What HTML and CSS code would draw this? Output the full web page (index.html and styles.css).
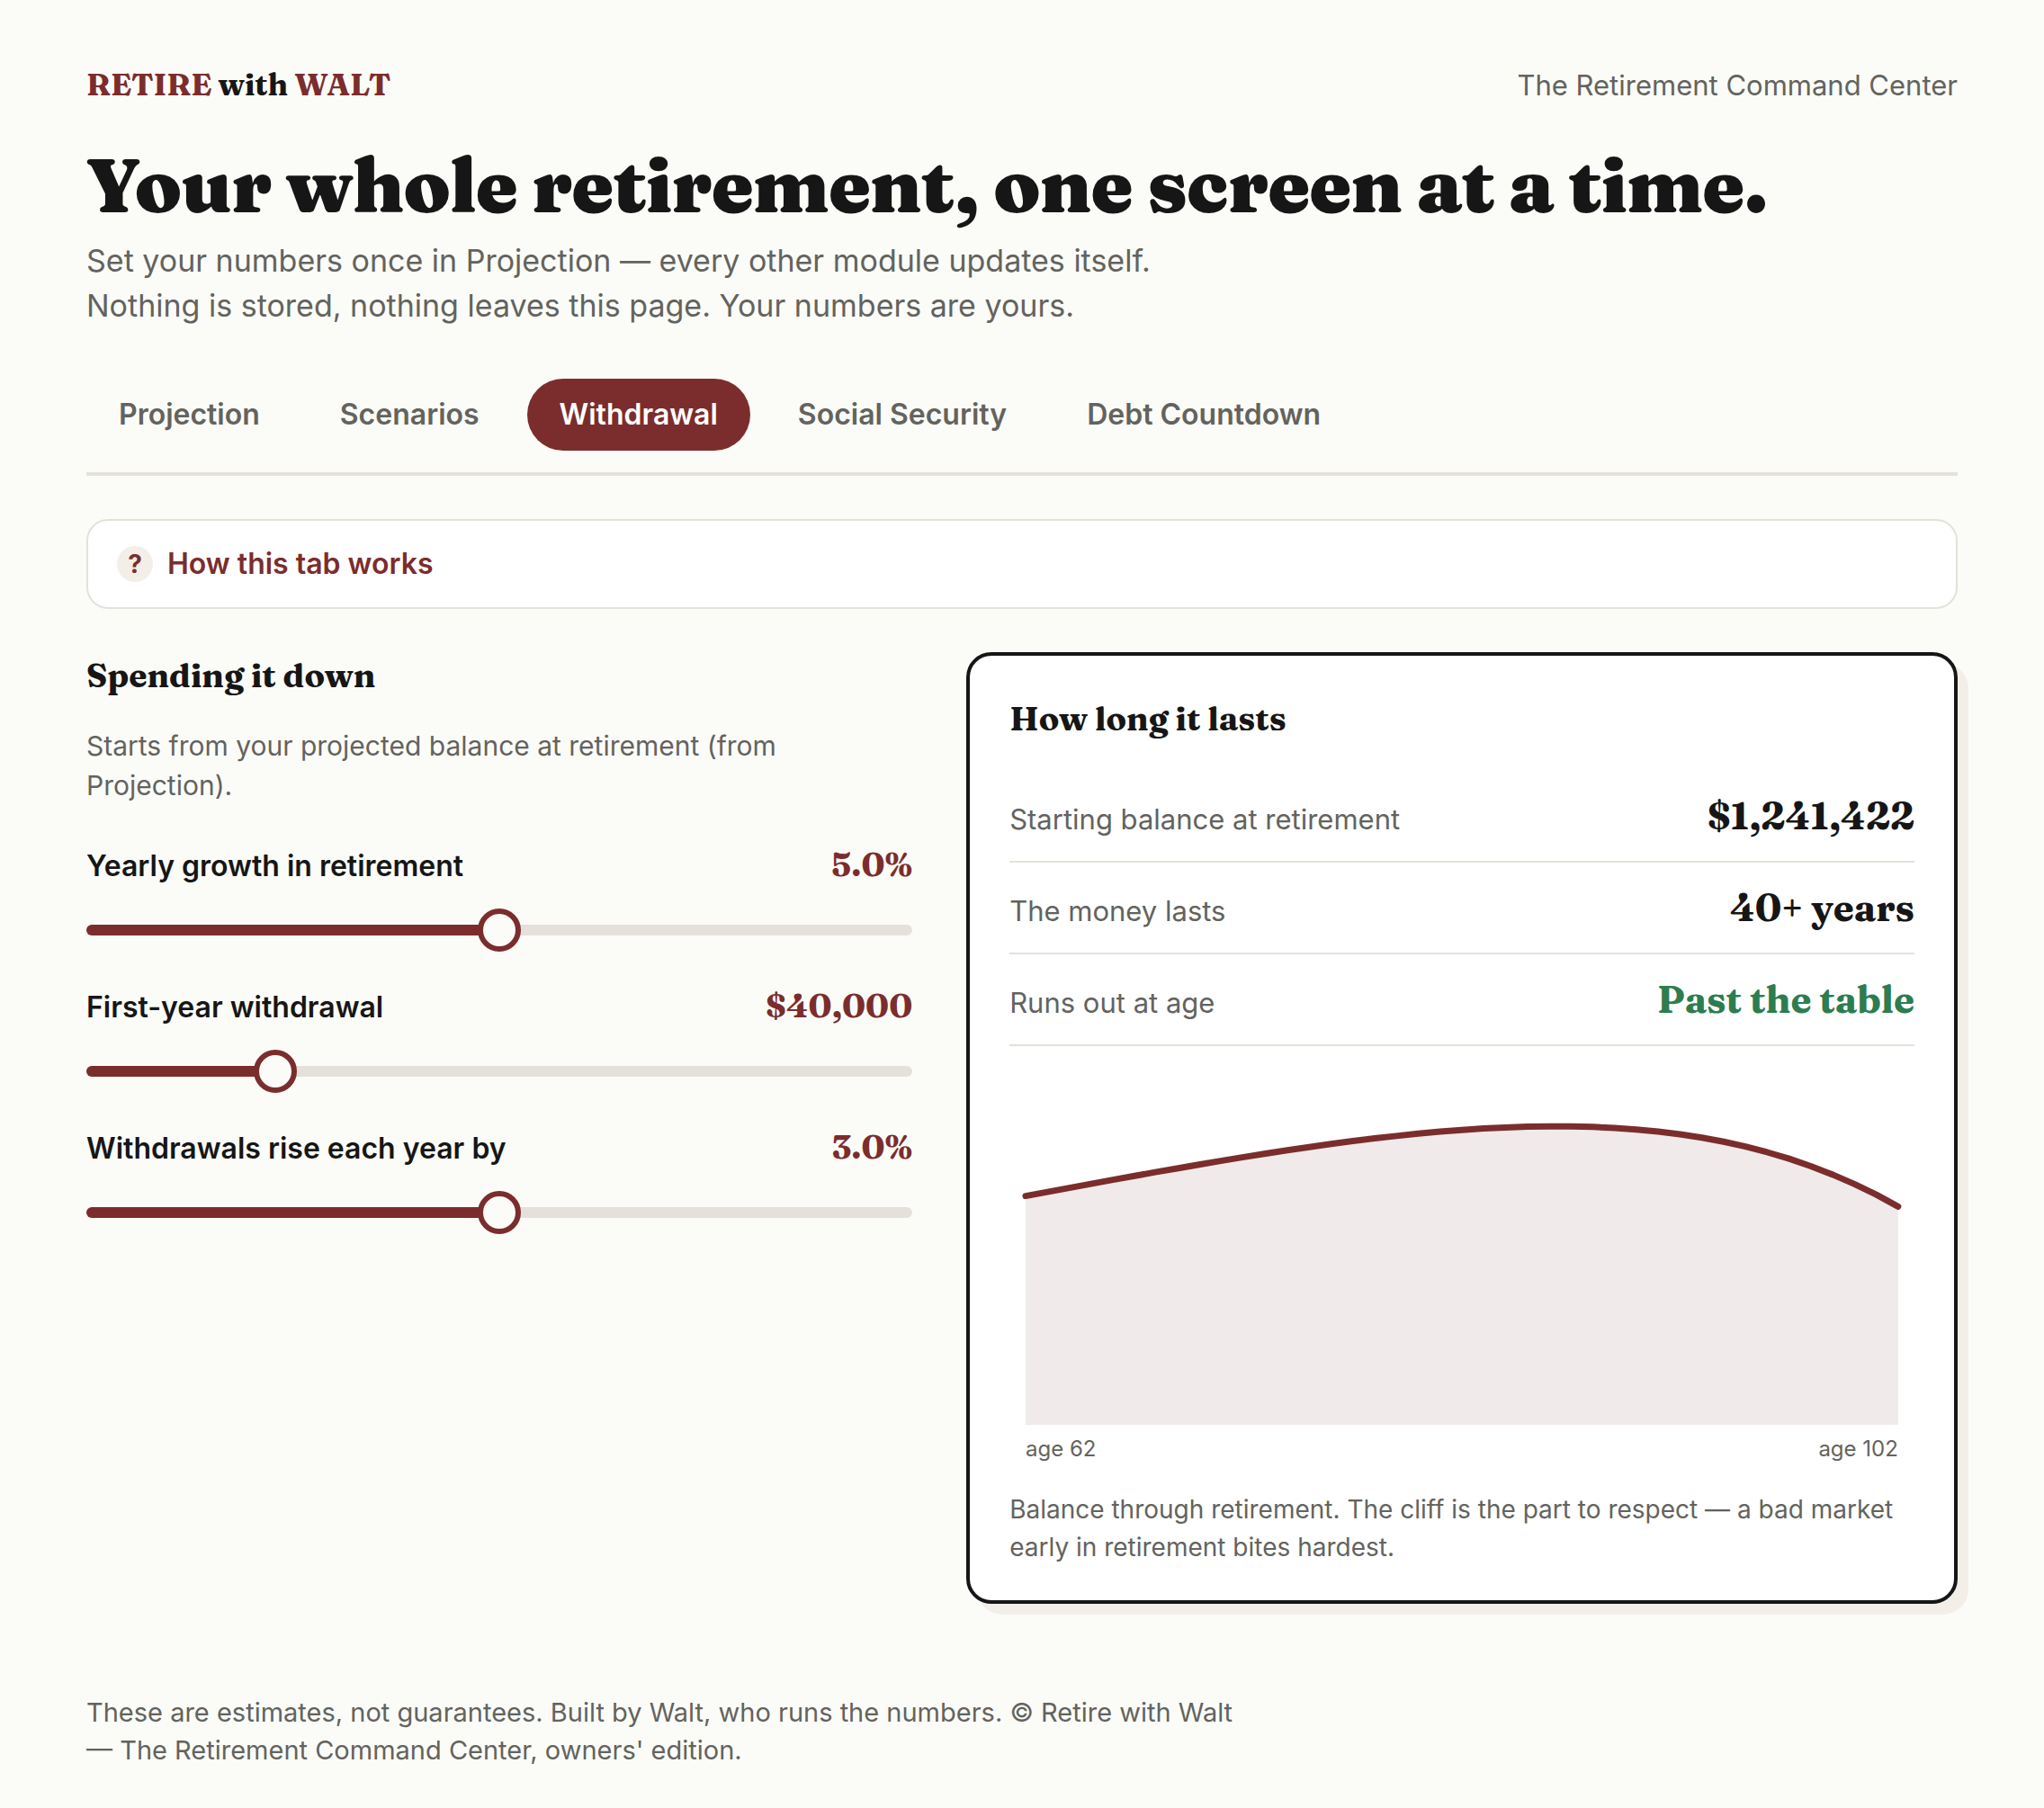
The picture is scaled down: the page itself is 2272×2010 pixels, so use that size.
FILE: index.html
```html
<!DOCTYPE html>
<html lang="en">
<head>
<meta charset="utf-8">
<meta name="viewport" content="width=device-width, initial-scale=1">
<title>The Retirement Command Center</title>
<link rel="stylesheet" href="styles.css">
</head>
<body>
<div class="page">
  <header class="masthead">
    <div class="brand"><span class="brand-accent">RETIRE</span> with <span class="brand-accent">WALT</span></div>
    <div class="tagline">The Retirement Command Center</div>
  </header>

  <h1 class="title">Your whole retirement, one screen at a time.</h1>
  <p class="lede">Set your numbers once in Projection — every other module updates itself. Nothing is stored, nothing leaves this page. Your numbers are yours.</p>

  <nav class="tabs" role="tablist" aria-label="Modules">
    <button class="tab" type="button" role="tab" aria-selected="false">Projection</button>
    <button class="tab" type="button" role="tab" aria-selected="false">Scenarios</button>
    <button class="tab" type="button" role="tab" aria-selected="true">Withdrawal</button>
    <button class="tab" type="button" role="tab" aria-selected="false">Social Security</button>
    <button class="tab" type="button" role="tab" aria-selected="false">Debt Countdown</button>
  </nav>

  <main>
    <button class="help" type="button" aria-expanded="false"><span class="help-mark" aria-hidden="true">?</span>How this tab works</button>

    <div class="columns">
      <section class="inputs">
        <h2 class="heading">Spending it down</h2>
        <p class="intro">Starts from your projected balance at retirement (from Projection).</p>

        <div class="field">
          <div class="field-head">
            <label class="field-label" for="growth">Yearly growth in retirement</label>
            <output class="field-value" for="growth">5.0%</output>
          </div>
          <input class="slider" id="growth" type="range" min="0" max="10" step="0.5" value="5" style="--fill: 50%">
        </div>
        <div class="field">
          <div class="field-head">
            <label class="field-label" for="withdrawal">First-year withdrawal</label>
            <output class="field-value" for="withdrawal">$40,000</output>
          </div>
          <input class="slider" id="withdrawal" type="range" min="10000" max="150000" step="1000" value="40000" style="--fill: 21.4%">
        </div>
        <div class="field">
          <div class="field-head">
            <label class="field-label" for="rise">Withdrawals rise each year by</label>
            <output class="field-value" for="rise">3.0%</output>
          </div>
          <input class="slider" id="rise" type="range" min="0" max="6" step="0.5" value="3" style="--fill: 50%">
        </div>
      </section>

      <section class="card">
        <h2 class="heading">How long it lasts</h2>
        <dl class="results">
          <div class="result"><dt>Starting balance at retirement</dt><dd>$1,241,422</dd></div>
          <div class="result"><dt>The money lasts</dt><dd>40+ years</dd></div>
          <div class="result"><dt>Runs out at age</dt><dd class="good">Past the table</dd></div>
        </dl>
        <svg class="chart" viewBox="0 0 1006 444" role="img" aria-label="Balance from age 62 to age 102">
          <path class="chart-area" id="area"/>
          <path class="chart-line" id="line"/>
          <text class="chart-label" x="18" y="430">age 62</text>
          <text class="chart-label" x="988" y="430" text-anchor="end">age 102</text>
        </svg>
        <p class="caption">Balance through retirement. The cliff is the part to respect — a bad market early in retirement bites hardest.</p>
      </section>
    </div>
  </main>

  <footer class="footer">These are estimates, not guarantees. Built by Walt, who runs the numbers. © Retire with Walt — The Retirement Command Center, owners' edition.</footer>
</div>
<script src="chart.js"></script>
</body>
</html>
```
FILE: styles.css
```css
:root {
  --paper: #fbfcf8;
  --ink: #161616;
  --muted: #63635e;
  --accent: #7b2d2d;
  --rule: #e5e1da;
  --tint: #f3efe8;
  --area: #f1eaea;
  --good: #2c7d4f;
  --serif: Fraunces, "DejaVu Serif Condensed", serif;
}

* { box-sizing: border-box; }

body {
  margin: 0;
  background: var(--paper);
  color: var(--ink);
  font: 400 32px/48px Inter, sans-serif;
}

h1, h2, p, dl, dd { margin: 0; }

.page { padding: 70px 96px 40px; }

.masthead {
  display: flex;
  justify-content: space-between;
  align-items: baseline;
}

.brand { font: 700 34px/48px var(--serif); }
.brand-accent { color: var(--accent); }
.tagline { font-size: 31px; color: var(--muted); }

.title {
  margin-top: 43px;
  font: 900 84px/88px var(--serif);
  letter-spacing: -0.01em;
}

.lede {
  max-width: 1240px;
  margin-top: 15px;
  font-size: 34px;
  line-height: 50px;
  color: var(--muted);
}

.tabs {
  display: flex;
  gap: 17px;
  margin-top: 56px;
  padding-bottom: 24px;
  border-bottom: 4px solid var(--rule);
}

.tab {
  height: 80px;
  padding: 0 36px;
  border: 0;
  border-radius: 40px;
  background: none;
  color: var(--muted);
  font: 600 32px/48px Inter, sans-serif;
}

.tab[aria-selected="true"] {
  background: var(--accent);
  color: #fff;
}

.help {
  display: flex;
  align-items: center;
  gap: 16px;
  width: 100%;
  margin: 48px 0;
  padding: 24px 32px;
  border: 2px solid var(--rule);
  border-radius: 24px;
  background: #fff;
  color: var(--accent);
  font: 600 32px/48px Inter, sans-serif;
}

.help-mark {
  width: 40px;
  border-radius: 50%;
  background: var(--tint);
  font-size: 28px;
  font-weight: 700;
  line-height: 40px;
  text-align: center;
}

.columns {
  display: grid;
  grid-template-columns: 1fr 1.2fr;
  gap: 60px;
  align-items: start;
}

.heading { font: 700 37px/52px var(--serif); }

.intro {
  margin: 30px 0 42px;
  font-size: 30px;
  line-height: 44px;
  color: var(--muted);
}

.field { margin-bottom: 36px; }

.field-head {
  display: flex;
  justify-content: space-between;
  align-items: baseline;
  margin-bottom: 23px;
}

.field-label { font-weight: 600; }

.field-value {
  font: 700 37px/48px var(--serif);
  color: var(--accent);
}

.slider {
  display: block;
  width: 100%;
  height: 48px;
  margin: 0;
  background: none;
  appearance: none;
}

.slider::-webkit-slider-runnable-track {
  height: 12px;
  border-radius: 6px;
  background: linear-gradient(to right, var(--accent) var(--fill), var(--rule) var(--fill));
}

.slider::-webkit-slider-thumb {
  width: 48px;
  height: 48px;
  margin-top: -18px;
  border: 6px solid var(--accent);
  border-radius: 50%;
  background: var(--paper);
  appearance: none;
}

.card {
  padding: 44px 44px 38px;
  border: 4px solid var(--ink);
  border-radius: 28px;
  background: #fff;
  box-shadow: 12px 12px 0 var(--tint);
}

.results { margin: 32px 0 26px; }

.result {
  display: flex;
  justify-content: space-between;
  align-items: baseline;
  padding: 20px 0;
  border-bottom: 2px solid var(--rule);
}

.result dt {
  font-size: 31px;
  line-height: 42px;
  color: var(--muted);
}

.result dd { font: 700 42px/60px var(--serif); }
.result .good { color: var(--good); }

.chart {
  display: block;
  width: 100%;
}

.chart-area { fill: var(--area); }

.chart-line {
  fill: none;
  stroke: var(--accent);
  stroke-width: 7;
  stroke-linecap: round;
  stroke-linejoin: round;
}

.chart-label { font-size: 24px; fill: var(--muted); }

.caption {
  margin-top: 24px;
  font-size: 28px;
  line-height: 42px;
  color: var(--muted);
}

.footer {
  max-width: 1280px;
  margin-top: 100px;
  font-size: 29px;
  line-height: 42px;
  color: var(--muted);
}
```
FILE: chart.js
```js
// Year-by-year balance through 40 years of retirement.
const START = 1241422;
const GROWTH = 0.05;
const WITHDRAWAL = 40000;
const RISE = 0.03;
const YEARS = 40;

const LEFT = 18;
const RIGHT = 988;
const BASE = 395;
const TOP_VALUE = 1620000;
const PLOT_HEIGHT = 332;

let balance = START;
let spend = WITHDRAWAL;
const points = [];
for (let year = 0; year <= YEARS; year++) {
  const x = LEFT + (RIGHT - LEFT) * year / YEARS;
  const y = BASE - PLOT_HEIGHT * balance / TOP_VALUE;
  points.push(x.toFixed(1) + " " + y.toFixed(1));
  balance = balance * (1 + GROWTH) - spend;
  spend *= 1 + RISE;
}

const curve = "M" + points.join("L");
document.getElementById("line").setAttribute("d", curve);
document.getElementById("area").setAttribute("d", curve + "L" + RIGHT + " " + BASE + "L" + LEFT + " " + BASE + "Z");
```
